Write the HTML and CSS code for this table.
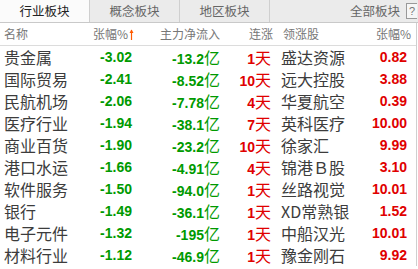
FILE: index.html
```html
<!DOCTYPE html>
<html lang="zh-CN">
<head>
<meta charset="utf-8">
<link rel="stylesheet" href="styles.css">
</head>
<body>
<div class="panel">
  <div class="tabs">
    <div class="tab active">行业板块</div>
    <div class="tab">概念板块</div>
    <div class="tab">地区板块</div>
    <div class="tab-fill"></div>
    <div class="tab-all">全部板块</div>
    <div class="help">?</div>
  </div>
  <div class="table">
    <div class="row head">
      <div class="c1">名称</div>
      <div class="c2">张幅%<svg class="arrow" width="5" height="11" viewBox="0 0 5 11"><path d="M2.5 1V11" stroke="#ff5a00" stroke-width="1.2"/><path d="M0.5 4L2.5 0.5L4.5 4Z" fill="#ff5a00"/></svg></div>
      <div class="c3">主力净流入</div>
      <div class="c4">连涨</div>
      <div class="c5">领涨股</div>
      <div class="c6">张幅%</div>
    </div>
    <div class="row"><div class="c1">贵金属</div><div class="c2 g">-3.02</div><div class="c3 g">-13.2<span class="u">亿</span></div><div class="c4 r">1<span class="u">天</span></div><div class="c5">盛达资源</div><div class="c6 r">0.82</div></div>
    <div class="row"><div class="c1">国际贸易</div><div class="c2 g">-2.41</div><div class="c3 g">-8.52<span class="u">亿</span></div><div class="c4 r">10<span class="u">天</span></div><div class="c5">远大控股</div><div class="c6 r">3.88</div></div>
    <div class="row"><div class="c1">民航机场</div><div class="c2 g">-2.06</div><div class="c3 g">-7.78<span class="u">亿</span></div><div class="c4 r">4<span class="u">天</span></div><div class="c5">华夏航空</div><div class="c6 r">0.39</div></div>
    <div class="row"><div class="c1">医疗行业</div><div class="c2 g">-1.94</div><div class="c3 g">-38.1<span class="u">亿</span></div><div class="c4 r">7<span class="u">天</span></div><div class="c5">英科医疗</div><div class="c6 r">10.00</div></div>
    <div class="row"><div class="c1">商业百货</div><div class="c2 g">-1.90</div><div class="c3 g">-23.2<span class="u">亿</span></div><div class="c4 r">10<span class="u">天</span></div><div class="c5">徐家汇</div><div class="c6 r">9.99</div></div>
    <div class="row"><div class="c1">港口水运</div><div class="c2 g">-1.66</div><div class="c3 g">-4.91<span class="u">亿</span></div><div class="c4 r">4<span class="u">天</span></div><div class="c5">锦港Ｂ股</div><div class="c6 r">3.10</div></div>
    <div class="row"><div class="c1">软件服务</div><div class="c2 g">-1.50</div><div class="c3 g">-94.0<span class="u">亿</span></div><div class="c4 r">1<span class="u">天</span></div><div class="c5">丝路视觉</div><div class="c6 r">10.01</div></div>
    <div class="row"><div class="c1">银行</div><div class="c2 g">-1.49</div><div class="c3 g">-36.1<span class="u">亿</span></div><div class="c4 r">1<span class="u">天</span></div><div class="c5">XD常熟银</div><div class="c6 r">1.52</div></div>
    <div class="row"><div class="c1">电子元件</div><div class="c2 g">-1.32</div><div class="c3 g">-195<span class="u">亿</span></div><div class="c4 r">1<span class="u">天</span></div><div class="c5">中船汉光</div><div class="c6 r">10.01</div></div>
    <div class="row"><div class="c1">材料行业</div><div class="c2 g">-1.12</div><div class="c3 g">-46.9<span class="u">亿</span></div><div class="c4 r">1<span class="u">天</span></div><div class="c5">豫金刚石</div><div class="c6 r">9.92</div></div>
  </div>
</div>
</body>
</html>
```

FILE: styles.css
```css
* { box-sizing: border-box; }
html, body { margin: 0; padding: 0; background: #fff; }
body {
  width: 418px;
  height: 269px;
  overflow: hidden;
  font-family: "Noto Sans CJK SC", "Liberation Sans", sans-serif;
}
.panel { width: 418px; }
.tabs {
  display: flex;
  height: 23px;
  background: #ebebeb;
  border-bottom: 1px solid #c9c9c9;
  align-items: stretch;
}
.tab {
  width: 90px;
  border-right: 1px solid #cfcfcf;
  font-size: 12.5px;
  color: #666;
  display: flex;
  align-items: center;
  justify-content: center;
  line-height: 1;
}
.tab.active { background: #fbfbfb; color: #222; }
.tab-fill { flex: 1; }
.tab-all {
  font-size: 12.5px;
  color: #666;
  display: flex;
  align-items: center;
  padding-right: 6px;
  line-height: 1;
}
.help {
  align-self: center;
  width: 11px;
  height: 16px;
  border: 1px solid #999;
  border-right: none;
  background: #f6f6f6;
  color: #777;
  font-size: 11px;
  font-family: "Liberation Sans", sans-serif;
  display: flex;
  align-items: center;
  justify-content: center;
  margin-right: 1px;
}
.table {
  width: 417px;
  border-right: 1px solid #cfcfcf;
}
.row {
  display: grid;
  grid-template-columns: 90px 45px 87px 52px 96px 46px;
  height: 22px;
  align-items: center;
  white-space: nowrap;
}
.row.head {
  height: 23px;
  border-bottom: 1px solid #dcdcdc;
}
.row > div { line-height: 1; }
.c1 { padding-left: 4px; font-size: 16px; color: #3c3c3c; }
.c2, .c3, .c4, .c6 {
  text-align: right;
  font-family: "Liberation Sans", "Noto Sans CJK SC", sans-serif;
  font-weight: bold;
  font-size: 14px;
}
.c2 { padding-right: 3px; }
.c3 { padding-right: 2px; }
.c4 { padding-right: 3px; }
.c5 { padding-left: 7px; font-size: 16px; color: #3c3c3c; }
.c6 { padding-right: 9px; }
.g { color: #009a00; }
.r { color: #e00000; }
.u {
  font-family: "Noto Sans CJK SC", sans-serif;
  font-weight: normal;
  font-size: 16px;
}
.head > div {
  font-family: "Noto Sans CJK SC", sans-serif;
  font-weight: normal;
  font-size: 12px;
  color: #777;
}
.head .c1 { padding-left: 4px; }
.head .c2 { text-align: left; padding-left: 3px; padding-right: 0; display: flex; align-items: center; gap: 1px; }
.head .c3 { padding-right: 2px; }
.head .c4 { padding-right: 1px; }
.head .c5 { padding-left: 9px; }
.head .c6 { padding-right: 5px; }
.arrow { display: block; }
```
